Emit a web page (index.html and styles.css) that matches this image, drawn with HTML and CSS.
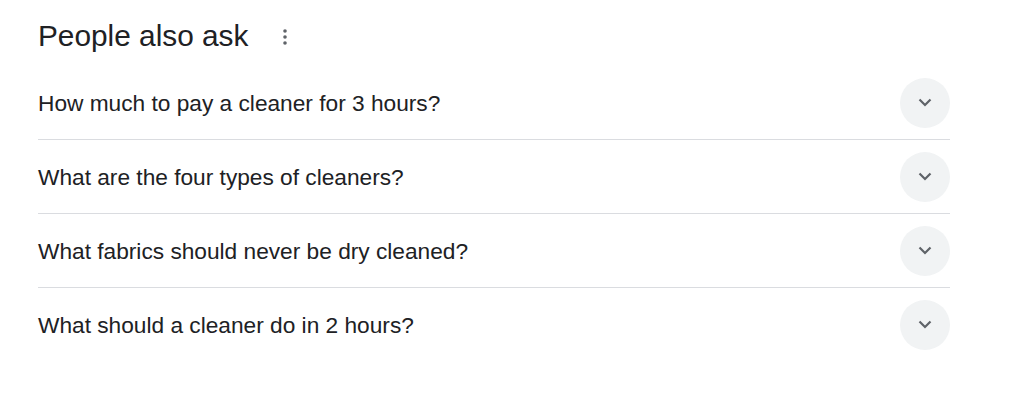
FILE: index.html
```html
<!DOCTYPE html>
<html>
<head>
<meta charset="utf-8">
<link rel="stylesheet" href="styles.css">
</head>
<body>
<div class="paa">
  <div class="header">
    <h2 class="title">People also ask</h2>
    <span class="more" aria-label="More options">
      <svg width="4" height="16" viewBox="0 0 4 16"><circle cx="2" cy="2" r="1.8" fill="#5f6368"/><circle cx="2" cy="8" r="1.8" fill="#5f6368"/><circle cx="2" cy="14" r="1.8" fill="#5f6368"/></svg>
    </span>
  </div>
  <div class="list">
    <div class="row"><span class="q">How much to pay a cleaner for 3 hours?</span><span class="btn"><svg width="14" height="9" viewBox="0 0 14 9"><path d="M1.5 1.5 L7 7 L12.5 1.5" fill="none" stroke="#5f6368" stroke-width="2.2"/></svg></span></div>
    <div class="row"><span class="q">What are the four types of cleaners?</span><span class="btn"><svg width="14" height="9" viewBox="0 0 14 9"><path d="M1.5 1.5 L7 7 L12.5 1.5" fill="none" stroke="#5f6368" stroke-width="2.2"/></svg></span></div>
    <div class="row"><span class="q">What fabrics should never be dry cleaned?</span><span class="btn"><svg width="14" height="9" viewBox="0 0 14 9"><path d="M1.5 1.5 L7 7 L12.5 1.5" fill="none" stroke="#5f6368" stroke-width="2.2"/></svg></span></div>
    <div class="row"><span class="q">What should a cleaner do in 2 hours?</span><span class="btn"><svg width="14" height="9" viewBox="0 0 14 9"><path d="M1.5 1.5 L7 7 L12.5 1.5" fill="none" stroke="#5f6368" stroke-width="2.2"/></svg></span></div>
  </div>
</div>
</body>
</html>
```
FILE: styles.css
```css
html, body {
  margin: 0;
  padding: 0;
  background: #ffffff;
}
body {
  font-family: "Liberation Sans", Arial, sans-serif;
  color: #202124;
}
.paa {
  width: 912px;
  margin-left: 38px;
  padding-top: 18px;
}
.header {
  display: flex;
  align-items: center;
  height: 36px;
  margin-bottom: 12px;
}
.title {
  margin: 0;
  font-size: 29.8px;
  font-weight: 400;
  line-height: 36px;
  color: #202124;
}
.more {
  display: flex;
  margin-left: 35px;
  margin-top: 2px;
}
.row {
  display: flex;
  align-items: center;
  justify-content: space-between;
  height: 73px;
  border-bottom: 1px solid #dadce0;
}
.row:last-child {
  border-bottom: none;
}
.q {
  font-size: 22.7px;
  line-height: 28px;
  color: #202124;
}
.btn {
  width: 50px;
  height: 50px;
  border-radius: 50%;
  background: #f1f3f4;
  display: flex;
  align-items: center;
  justify-content: center;
}
```
